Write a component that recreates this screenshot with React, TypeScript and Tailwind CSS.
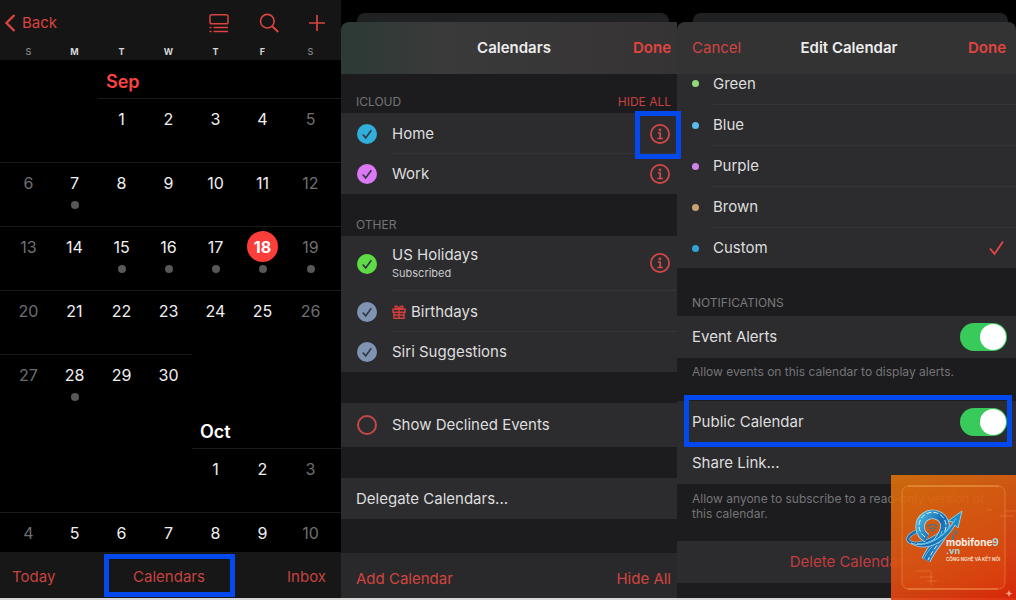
import { Fragment } from "react";
import type { ReactNode } from "react";
import clsx from "clsx";

const WEEKDAYS = ["S", "M", "T", "W", "T", "F", "S"];

type Week = { start: number; first: number; last: number; dots?: number[]; today?: number };

const SEPTEMBER: Week[] = [
  { start: 2, first: 1, last: 5 },
  { start: 0, first: 6, last: 12, dots: [7] },
  { start: 0, first: 13, last: 19, dots: [15, 16, 17, 18, 19], today: 18 },
  { start: 0, first: 20, last: 26 },
  { start: 0, first: 27, last: 30, dots: [28] },
];

const OCTOBER: Week[] = [
  { start: 4, first: 1, last: 3 },
  { start: 0, first: 4, last: 10 },
];

const COLORS = [
  { name: "Blue", dot: "bg-[#5bbcec]" },
  { name: "Purple", dot: "bg-[#cf83ea]" },
  { name: "Brown", dot: "bg-[#c9a070]" },
  { name: "Custom", dot: "bg-[#2fa5d4]" },
];

const WEEK_GRID = "grid grid-cols-[51fr_47fr_47fr_47fr_47fr_47fr_55fr]";

function cellPad(col: number) {
  return clsx(col === 0 && "pl-1.5", col === 6 && "pr-1.5");
}

function WeekRow({ start, first, last, dots = [], today }: Week) {
  const days = Array.from({ length: last - first + 1 }, (_, i) => first + i);
  return (
    <div className={clsx(WEEK_GRID, "h-16 shrink-0")}>
      {Array.from({ length: start }, (_, i) => <span key={`gap-${i}`} />)}
      {days.map((day, i) => {
        const col = start + i;
        const weekend = col === 0 || col === 6;
        return (
          <div key={day} className={clsx("flex flex-col items-center border-t border-[#1a1a1a] pt-1", cellPad(col))}>
            <button
              className={clsx(
                "flex size-[31px] shrink-0 items-center justify-center rounded-full text-base",
                day === today ? "bg-[#fb3e3a] font-bold text-white" : weekend ? "text-[#6f6f73]" : "text-[#f0f0f0]"
              )}
            >
              {day}
            </button>
            {dots.includes(day) && <span className="mt-[3px] size-2 rounded-full bg-[#58585a]" />}
          </div>
        );
      })}
    </div>
  );
}

function MonthScreen() {
  return (
    <section className="flex min-h-0 flex-col bg-black">
      <header className="h-[60px] shrink-0 bg-[#151515] pt-2.5 text-[#d9443e]">
        <div className="flex h-[26px] items-center justify-between pl-1 pr-4">
          <button className="flex items-center gap-1.5 text-[15px]">
            <svg className="h-5 w-3" viewBox="0 0 12 20" fill="none" stroke="currentColor" strokeWidth="2.4">
              <path d="M10.5 2 2.5 10l8 8" />
            </svg>
            Back
          </button>
          <div className="flex items-center gap-[30px]">
            <button aria-label="List view">
              <svg className="size-5" viewBox="0 0 20 20" fill="none" stroke="currentColor" strokeWidth="1.5">
                <rect x="1" y="1.8" width="18" height="9" rx="1.8" />
                <path d="M4.5 14.5H19M4.5 18.5H19M.5 14.5h2M.5 18.5h2" />
              </svg>
            </button>
            <button aria-label="Search">
              <svg className="size-5" viewBox="0 0 20 20" fill="none" stroke="currentColor" strokeWidth="1.6">
                <circle cx="8.3" cy="8.2" r="6.8" />
                <path d="m13.2 13.2 6 5.8" strokeWidth="2" />
              </svg>
            </button>
            <button aria-label="Add event">
              <svg className="size-4" viewBox="0 0 16 16" fill="none" stroke="currentColor" strokeWidth="1.7">
                <path d="M8 0v16M0 8h16" />
              </svg>
            </button>
          </div>
        </div>
        <div className={clsx(WEEK_GRID, "pt-2 text-center text-[9px] leading-4")}>
          {WEEKDAYS.map((d, i) => (
            <span key={i} className={clsx(cellPad(i), i % 6 === 0 ? "font-medium text-[#88888b]" : "font-bold text-[#d5d5d5]")}>
              {d}
            </span>
          ))}
        </div>
      </header>

      <div className="flex min-h-0 flex-1 flex-col overflow-hidden">
        <div className={clsx(WEEK_GRID, "h-[38px] shrink-0")}>
          <h2 className="col-start-3 pl-2 pt-2.5 text-lg leading-6 font-semibold text-[#fb4441]">Sep</h2>
        </div>
        {SEPTEMBER.map((w) => <WeekRow key={w.first} {...w} />)}
        <div className={clsx(WEEK_GRID, "h-[30px] shrink-0")}>
          <h2 className="col-start-5 pl-2 pt-0.5 text-lg leading-6 font-semibold text-white">Oct</h2>
        </div>
        {OCTOBER.map((w) => <WeekRow key={w.first} {...w} />)}
      </div>

      <footer className="grid h-[46px] shrink-0 grid-cols-[1fr_auto_1fr] items-center bg-[#171717] pl-3 pr-[15px] text-[15px] text-[#c5433f]">
        <button className="justify-self-start pt-1">Today</button>
        <button className="h-[43px] w-[131px] border-[5px] border-[#0449ee] pt-1">Calendars</button>
        <button className="justify-self-end pt-1">Inbox</button>
      </footer>
    </section>
  );
}

/* Modal sheet with the edge of the previous card peeking out above it */
function Sheet({ header, children }: { header: ReactNode; children: ReactNode }) {
  return (
    <section className="flex min-h-0 min-w-0 flex-col bg-black pt-[13px]">
      <div className="mr-2 ml-4 h-[9px] shrink-0 rounded-t-lg bg-[#202122]" />
      {header}
      <div className="flex min-h-0 flex-1 flex-col bg-[#1c1c1e]">{children}</div>
    </section>
  );
}

function InfoButton({ label, highlighted }: { label: string; highlighted?: boolean }) {
  return (
    <button aria-label={label} className="relative size-5 shrink-0 text-[#d8484a]">
      <svg viewBox="0 0 20 20" fill="none" stroke="currentColor" strokeWidth="1.7">
        <circle cx="10" cy="10" r="9.1" />
        <circle cx="9.9" cy="5.9" r="1.4" fill="currentColor" stroke="none" />
        <path d="M7.800 9h2.400v5.400M7.400 14.500h5.400" />
      </svg>
      {highlighted && (
        <span className="absolute -top-[13px] -right-[11px] -bottom-[15px] -left-[15px] z-10 border-[5px] border-[#0449ee]" />
      )}
    </button>
  );
}

type CalendarRowProps = {
  name: string;
  color: string;
  note?: string;
  gift?: boolean;
  info?: boolean;
  highlighted?: boolean;
  divider?: boolean;
};

function CalendarRow({ name, color, note, gift, info, highlighted, divider }: CalendarRowProps) {
  return (
    <div className="flex items-stretch bg-[#2c2c2e] pl-4">
      <label className="flex items-center">
        <span className="mr-[15px] grid size-5">
          <input
            type="checkbox"
            defaultChecked
            aria-label={name}
            className={clsx("size-5 appearance-none rounded-full [grid-area:1/1]", color)}
          />
          <svg className="pointer-events-none size-5 [grid-area:1/1]" viewBox="0 0 20 20" fill="none" stroke="#343b46" strokeWidth="1.7">
            <path d="m5.7 10.5 3 3.4 5.6-7.7" />
          </svg>
        </span>
      </label>
      <div
        className={clsx(
          "flex flex-1 items-center justify-between pr-[7px]",
          note ? "h-[55px]" : divider ? "h-[41px] pt-px" : "h-10",
          divider && "border-b border-[#353537]"
        )}
      >
        <div>
          <div className="flex items-center gap-[5px] leading-5">
            {gift && (
              <svg className="size-3.5 text-[#d23d3d]" viewBox="0 0 14 14" fill="none" stroke="currentColor" strokeWidth="1.5">
                <path d="M1 4.2h12v3H1zM2 7.2h10v6H2zM7 4v9M7 4C5.500 0 2.600.4 3.200 2.500 3.600 3.800 5.500 4 7 4c1.500 0 3.400-.2 3.800-1.500C11.400.4 8.500 0 7 4ZM2 10h10" />
              </svg>
            )}
            {name}
          </div>
          {note && <div className="text-[11px] leading-4 text-[#c9c9cb]">{note}</div>}
        </div>
        {info && <InfoButton label={`${name} details`} highlighted={highlighted} />}
      </div>
    </div>
  );
}

function CalendarsScreen() {
  return (
    <Sheet
      header={
        <header className="grid h-[52px] shrink-0 grid-cols-[1fr_auto_1fr] items-center rounded-tl-lg bg-linear-to-r from-[#2c3a35] via-[#3a3a3b] via-30% to-[#363334] pr-1.5 pl-4">
          <h1 className="col-start-2 font-semibold text-[#ececec]">Calendars</h1>
          <button className="justify-self-end font-semibold text-[#e2443f]">Done</button>
        </header>
      }
    >
      <div className="flex h-[39px] items-end justify-between pr-1.5 pb-[3px] pl-[15px] text-xs leading-4">
        <h2 className="text-[#747477]">ICLOUD</h2>
        <button className="text-[#c8403f]">HIDE ALL</button>
      </div>
      <CalendarRow name="Home" color="bg-[#30afdd]" info highlighted divider />
      <CalendarRow name="Work" color="bg-[#dc78f5]" info />
      <h2 className="flex h-[42px] items-end pb-[3px] pl-[15px] text-xs leading-4 text-[#747477]">OTHER</h2>
      <CalendarRow name="US Holidays" color="bg-[#5edb45]" note="Subscribed" info divider />
      <CalendarRow name="Birthdays" color="bg-[#7f94b2]" gift divider />
      <CalendarRow name="Siri Suggestions" color="bg-[#7f94b2]" />
      <label className="mt-[31px] flex h-11 items-center gap-[15px] bg-[#2c2c2e] pl-4">
        <input type="checkbox" className="size-5 appearance-none rounded-full border-2 border-[#c54848]" />
        Show Declined Events
      </label>
      <button className="mt-[31px] h-[41px] bg-[#2c2c2e] pt-0.5 pl-[15px] text-left">Delegate Calendars...</button>
      <footer className="mt-auto flex h-[45px] items-center justify-between bg-[#29292b] pt-2 pr-1.5 pl-[15px] text-[#d2443f]">
        <button>Add Calendar</button>
        <button>Hide All</button>
      </footer>
    </Sheet>
  );
}

function Toggle({ label }: { label: string }) {
  return (
    <input
      type="checkbox"
      role="switch"
      aria-label={label}
      defaultChecked
      className="flex h-7 w-[47px] appearance-none items-center justify-end rounded-full bg-[#39ca5c] p-px before:size-[26px] before:rounded-full before:bg-white"
    />
  );
}

function EditScreen() {
  return (
    <Sheet
      header={
        <header className="grid h-[52px] shrink-0 grid-cols-[1fr_auto_1fr] items-center rounded-t-lg bg-[#333334] pr-2.5 pl-[15px]">
          <button className="justify-self-start text-[#d2443f]">Cancel</button>
          <h1 className="font-semibold text-[#ececec]">Edit Calendar</h1>
          <button className="justify-self-end font-semibold text-[#e2443f]">Done</button>
        </header>
      }
    >
      <div className="grid shrink-0 grid-cols-[36px_1fr] bg-[#2c2c2e]">
        <span className="mt-1.5 ml-[15px] size-[7px] rounded-full bg-[#90da7a]" />
        <button className="h-[31px] border-b border-[#353537] pb-2.5 text-left leading-5">Green</button>
        {COLORS.map(({ name, dot }) => (
          <Fragment key={name}>
            <span className={clsx("ml-[15px] size-[7px] self-center rounded-full", dot)} />
            <button
              className={clsx(
                "flex items-center justify-between pr-3",
                name === "Custom" ? "h-10" : "h-[41px] border-b border-[#353537]"
              )}
            >
              {name}
              {name === "Custom" && (
                <svg className="h-4 w-[15px] text-[#e34646]" viewBox="0 0 15 16" fill="none" stroke="currentColor" strokeWidth="1.9">
                  <path d="m1 8.500 4.500 5.500L14 1.500" />
                </svg>
              )}
            </button>
          </Fragment>
        ))}
      </div>
      <h2 className="flex h-12 shrink-0 items-end pb-[5px] pl-[15px] text-xs leading-4 text-[#79797c]">NOTIFICATIONS</h2>
      <label className="flex h-[42px] shrink-0 items-center justify-between bg-[#2c2c2e] pr-[9px] pl-[15px]">
        Event Alerts
        <Toggle label="Event Alerts" />
      </label>
      <p className="h-[43px] shrink-0 pt-1.5 pl-[15px] text-xs leading-4 text-[#747477]">
        Allow events on this calendar to display alerts.
      </p>
      <div className="relative shrink-0 bg-[#2c2c2e] pl-[15px]">
        <label className="flex h-[42px] items-center justify-between pr-[9px]">
          Public Calendar
          <Toggle label="Public Calendar" />
        </label>
        <button className="block h-[41px] w-full text-left">Share Link...</button>
        <span className="pointer-events-none absolute -top-[6px] right-[4px] left-[7px] h-[52px] border-[5px] border-[#0449ee]" />
      </div>
      <p className="h-[57px] shrink-0 pt-[7px] pr-4 pl-[15px] text-xs leading-[15px] text-[#747477]">
        Allow anyone to subscribe to a read-only version of this calendar.
      </p>
      <button className="h-[42px] shrink-0 bg-[#2c2c2e] text-[#c33d3e]">Delete Calendar</button>
    </Sheet>
  );
}

function Watermark() {
  return (
    <div className="absolute right-0 bottom-0 size-[125px] bg-linear-[155deg] from-[#dc7209]/90 via-[#dd4f12]/92 via-55% to-[#e02509]/95">
      <svg viewBox="0 0 125 125" fill="none">
        <defs>
          <linearGradient id="nine" x1="0" y1="0" x2="1" y2="1">
            <stop offset="0" stopColor="#48b4dc" />
            <stop offset="0.5" stopColor="#1469b3" />
            <stop offset="1" stopColor="#3ba9e0" />
          </linearGradient>
          <linearGradient id="arrow" x1="0" y1="1" x2="1" y2="0">
            <stop offset="0" stopColor="#1a64ad" />
            <stop offset="1" stopColor="#1b96cf" />
          </linearGradient>
        </defs>
        <rect x="11" y="11" width="103" height="103" rx="6" fill="#f76a10" fillOpacity="0.15" stroke="#f4a04c" strokeOpacity="0.45" />
        <path d="M17 11h91M17 114h90" stroke="#ffc176" strokeOpacity="0.5" />
        <path d="M114 36h11M109 41h14M96 35h5M25 96h14M29 102h13M40 96v14M36 106h10" stroke="#ff9e53" strokeOpacity="0.5" strokeWidth="0.7" />
        {/* orbit behind the nine */}
        <path d="M30 55c-11 3-16 9-11 12 7 4 24-1 36-14" stroke="#8fd0e6" strokeWidth="3.600" />
        <path d="M30 55c-11 3-16 9-11 12 7 4 24-1 36-14" stroke="#1a6cb0" strokeWidth="2.400" />
        {/* ring and stem of the nine */}
        <path d="M36 63A12.500 12.500 0 1 1 54 50C54 62 43 68 35 85" stroke="#a9dbe8" strokeWidth="9.500" />
        <path d="M36 63A12.500 12.500 0 1 1 54 50C54 62 43 68 35 85" stroke="url(#nine)" strokeWidth="7.800" />
        <path d="M34 62A13.500 13.500 0 1 1 55 50C55 62 44 70 37 85" stroke="#d7f1f7" strokeWidth="1" strokeDasharray="5 2" />
        <path d="M51 56C50 64 39 71 32.500 84" stroke="#7bc8e6" strokeWidth="0.9" />
        {/* arrow sweeping over the front */}
        <path d="M20 68c14 6 34-6 42-21l-5-1 14-10-4 17-3-3C56 66 34 79 20 68Z" fill="url(#arrow)" stroke="#9ad6e8" strokeWidth="0.9" />
        <path d="M26 68.500c14 2 28-7 39-25" stroke="#56c0e8" strokeWidth="1.300" />
        <path d="M62 60v6M65 55v5" stroke="#1686bd" strokeWidth="1.500" />
        <path d="M36.500 51.500q5-4 10 0M38.500 54q3-2.500 6 0M40 56q1.500-1 3 0" stroke="#217fa7" strokeWidth="1.200" />
        <path d="m118 115 1 2.500 2.500 1-2.500 1-1 2.500-1-2.500-2.500-1 2.500-1Z" fill="#ffa184" />
        <g fontFamily="Inter, sans-serif" fontWeight="700">
          <text x="55" y="71" fontSize="10" fill="#f5eee8">mobifone<tspan fill="#a4d8df">9</tspan></text>
          <text x="55" y="79" fontSize="9" fill="#a4d8df">.vn</text>
          <text x="55" y="86" fontSize="4.500" fontWeight="600" fill="#ffe7d8">CÔNG NGHỆ VÀ KẾT NỐI</text>
        </g>
      </svg>
    </div>
  );
}

export default function App() {
  return (
    <main className="relative grid h-screen grid-cols-[341fr_336fr_339fr] grid-rows-1 overflow-hidden bg-[#d8d8d8] pb-0.5 font-['Inter',sans-serif] text-[15px] text-[#dededf]">
      <MonthScreen />
      <CalendarsScreen />
      <EditScreen />
      <Watermark />
    </main>
  );
}
